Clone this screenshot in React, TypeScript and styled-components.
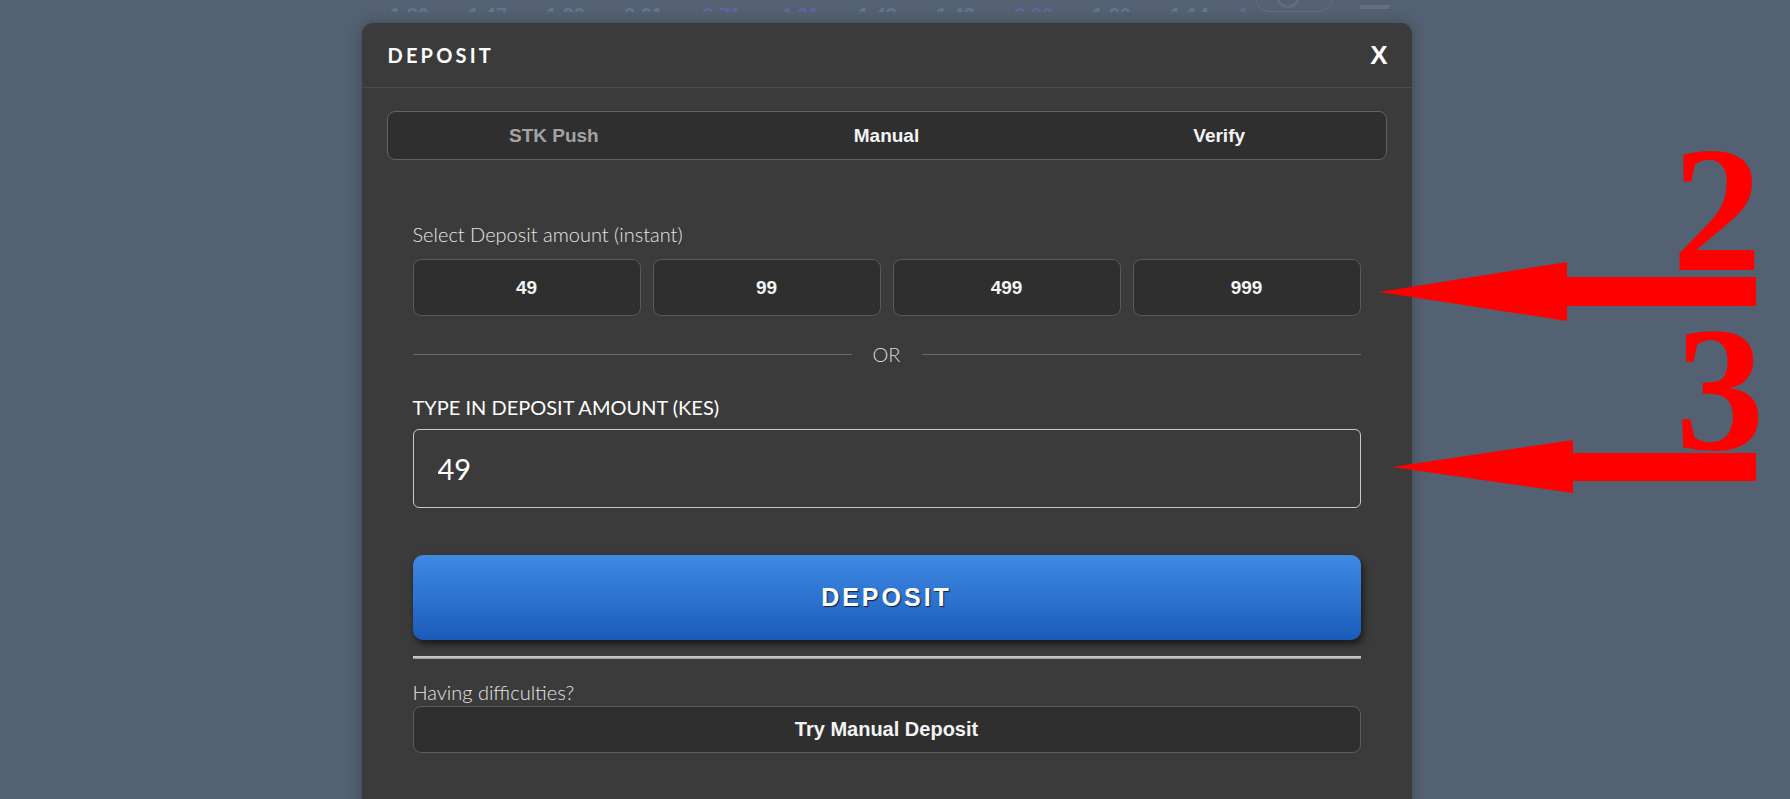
import React, { useState } from "react";
import styled, { createGlobalStyle } from "styled-components";

const GlobalStyle = createGlobalStyle`
  html, body {
    margin: 0;
    padding: 0;
    background: #546172;
    overflow: hidden;
  }
  * {
    box-sizing: border-box;
  }
`;

const odds = [
  { v: "1.80", hot: false },
  { v: "1.47", hot: false },
  { v: "1.20", hot: false },
  { v: "2.01", hot: false },
  { v: "2.71", hot: true },
  { v: "4.01", hot: true },
  { v: "1.42", hot: false },
  { v: "1.42", hot: false },
  { v: "2.80", hot: true },
  { v: "1.20", hot: false },
  { v: "1.14", hot: false },
];

const amounts = ["49", "99", "499", "999"];
const tabs = ["STK Push", "Manual", "Verify"];

const App: React.FC = () => {
  const [amount, setAmount] = useState("49");

  return (
    <Page>
      <GlobalStyle />
      <OddsRow>
        {odds.map((o, i) => (
          <Odd key={i} $hot={o.hot}>
            {o.v}
          </Odd>
        ))}
        <Odd $hot>1</Odd>
        <SearchPill>
          <PillDot />
        </SearchPill>
        <MenuBar />
      </OddsRow>

      <Modal>
        <Header>
          <HeaderTitle>DEPOSIT</HeaderTitle>
          <CloseButton>X</CloseButton>
        </Header>

        <TabBar>
          {tabs.map((t) => (
            <Tab key={t} $muted={t === "STK Push"}>
              {t}
            </Tab>
          ))}
        </TabBar>

        <Body>
          <Label>Select Deposit amount (instant)</Label>
          <AmountGrid>
            {amounts.map((a) => (
              <AmountButton key={a} onClick={() => setAmount(a)}>
                {a}
              </AmountButton>
            ))}
          </AmountGrid>

          <OrRow>
            <OrLine />
            <OrText>OR</OrText>
            <OrLine />
          </OrRow>

          <FieldLabel>TYPE IN DEPOSIT AMOUNT (KES)</FieldLabel>
          <AmountInput
            type="text"
            value={amount}
            onChange={(e) => setAmount(e.target.value)}
          />

          <DepositButton>DEPOSIT</DepositButton>
          <Divider />

          <HelpText>Having difficulties?</HelpText>
          <ManualButton>Try Manual Deposit</ManualButton>
        </Body>
      </Modal>

      <Annotations viewBox="0 0 1790 799" width="1790" height="799">
        <polygon
          points="1379,292 1567,262 1567,277 1756,277 1756,306 1567,306 1567,321"
          fill="#ff0000"
        />
        <polygon
          points="1392,467 1573,440 1573,453 1756,453 1756,481 1573,481 1573,493"
          fill="#ff0000"
        />
        <text
          x="1717"
          y="270"
          textAnchor="middle"
          fontFamily="'Liberation Serif', serif"
          fontWeight="bold"
          fontSize="180"
          fill="#ff0000"
        >
          2
        </text>
        <text
          x="1720"
          y="449"
          textAnchor="middle"
          fontFamily="'Liberation Serif', serif"
          fontWeight="bold"
          fontSize="178"
          fill="#ff0000"
        >
          3
        </text>
      </Annotations>
    </Page>
  );
};

const Page = styled.div`
  position: relative;
  width: 1790px;
  height: 799px;
  padding-right: 17px;
  overflow: hidden;
  background: #546172;
  font-family: "Liberation Sans", Arial, sans-serif;
`;

const OddsRow = styled.div`
  width: 1050px;
  height: 12px;
  margin: 0 auto;
  padding-left: 9px;
  display: flex;
  align-items: flex-end;
  overflow: hidden;
`;

const Odd = styled.div<{ $hot: boolean }>`
  width: 78px;
  flex-shrink: 0;
  text-align: center;
  font-size: 20px;
  font-weight: 700;
  line-height: 24px;
  margin-bottom: -15px;
  color: ${(p) => (p.$hot ? "#66639a" : "#64748e")};
  &:nth-child(12) {
    width: 30px;
  }
`;

const SearchPill = styled.div`
  width: 78px;
  height: 30px;
  margin-left: -4px;
  border: 1px solid #65707f;
  border-radius: 18px;
  display: flex;
  align-items: flex-end;
  justify-content: center;
  flex-shrink: 0;
`;

const PillDot = styled.div`
  width: 22px;
  height: 22px;
  margin-bottom: 3px;
  margin-right: 12px;
  border: 2px solid #65707f;
  border-radius: 50%;
`;

const MenuBar = styled.div`
  width: 30px;
  height: 4px;
  margin-left: 27px;
  margin-bottom: 3px;
  background: #65707f;
  flex-shrink: 0;
`;

const Modal = styled.div`
  width: 1050px;
  margin: 11px auto 0;
  background: #3b3b3b;
  border-radius: 11px;
  box-shadow: 0 0 14px rgba(0, 0, 0, 0.25);
  padding-bottom: 80px;
`;

const Header = styled.div`
  height: 65px;
  padding: 0 24px 0 26px;
  display: flex;
  align-items: center;
  justify-content: space-between;
  border-bottom: 1px solid #4a4a4a;
`;

const HeaderTitle = styled.h2`
  margin: 0;
  font-family: Lato, "Open Sans", sans-serif;
  font-weight: 700;
  font-size: 20px;
  letter-spacing: 3.2px;
  color: #ffffff;
`;

const CloseButton = styled.button`
  background: none;
  border: none;
  padding: 0;
  font-family: "Liberation Sans", Arial, sans-serif;
  font-weight: 700;
  font-size: 26px;
  color: #ffffff;
  cursor: pointer;
`;

const TabBar = styled.div`
  margin: 23px 25px 0;
  height: 49px;
  display: grid;
  grid-template-columns: repeat(3, 1fr);
  background: #2f2f2f;
  border: 1px solid #626262;
  border-radius: 8px;
`;

const Tab = styled.button<{ $muted: boolean }>`
  background: none;
  border: none;
  font-family: "Liberation Sans", Arial, sans-serif;
  font-weight: 700;
  font-size: 19px;
  color: ${(p) => (p.$muted ? "#a3a3a3" : "#f4f4f4")};
  cursor: pointer;
`;

const Body = styled.div`
  padding: 62px 51px 0;
  display: flex;
  flex-direction: column;
`;

const Label = styled.div`
  font-family: Lato, "Open Sans", sans-serif;
  font-weight: 300;
  font-size: 20px;
  line-height: 24px;
  color: #e6e6e6;
`;

const AmountGrid = styled.div`
  margin-top: 13px;
  display: grid;
  grid-template-columns: repeat(4, 1fr);
  gap: 12px;
`;

const AmountButton = styled.button`
  height: 57px;
  background: #2f2f2f;
  border: 1px solid #595959;
  border-radius: 8px;
  font-family: "Liberation Sans", Arial, sans-serif;
  font-weight: 700;
  font-size: 19px;
  color: #f4f4f4;
  cursor: pointer;
`;

const OrRow = styled.div`
  margin-top: 26px;
  height: 24px;
  display: flex;
  align-items: center;
  gap: 21px;
`;

const OrLine = styled.div`
  flex: 1;
  height: 1px;
  background: #6a6a6a;
`;

const OrText = styled.span`
  font-family: Lato, "Open Sans", sans-serif;
  font-weight: 300;
  font-size: 20px;
  line-height: 24px;
  color: #d8d8d8;
`;

const FieldLabel = styled.label`
  margin-top: 29px;
  font-family: Lato, "Open Sans", sans-serif;
  font-weight: 400;
  font-size: 20px;
  line-height: 24px;
  color: #ffffff;
`;

const AmountInput = styled.input`
  margin-top: 10px;
  height: 79px;
  padding: 0 24px;
  background: transparent;
  border: 1px solid #c9c9c9;
  border-radius: 6px;
  font-family: Lato, "Open Sans", sans-serif;
  font-size: 29px;
  color: #ffffff;
  outline: none;
`;

const DepositButton = styled.button`
  margin-top: 47px;
  height: 85px;
  border: none;
  border-radius: 10px;
  background: linear-gradient(180deg, #3f8ae2 0%, #2d73d0 50%, #1a5bb7 100%);
  box-shadow: 2px 4px 7px rgba(0, 0, 0, 0.6);
  font-family: "Liberation Sans", Arial, sans-serif;
  font-weight: 700;
  font-size: 25px;
  letter-spacing: 3px;
  color: #ffffff;
  text-shadow: 1px 1px 1px rgba(0, 0, 0, 0.7);
  cursor: pointer;
`;

const Divider = styled.div`
  margin-top: 16px;
  height: 3px;
  background: linear-gradient(180deg, #d6d6d6, #9a9a9a);
`;

const HelpText = styled.div`
  margin-top: 21px;
  font-family: Lato, "Open Sans", sans-serif;
  font-weight: 300;
  font-size: 20px;
  line-height: 24px;
  color: #e6e6e6;
`;

const ManualButton = styled.button`
  margin-top: 2px;
  height: 47px;
  background: #2f2f2f;
  border: 1px solid #5c5c5c;
  border-radius: 8px;
  font-family: "Liberation Sans", Arial, sans-serif;
  font-weight: 700;
  font-size: 20px;
  color: #f4f4f4;
  cursor: pointer;
`;

const Annotations = styled.svg`
  position: absolute;
  left: 0;
  top: 0;
  pointer-events: none;
`;

export default App;
